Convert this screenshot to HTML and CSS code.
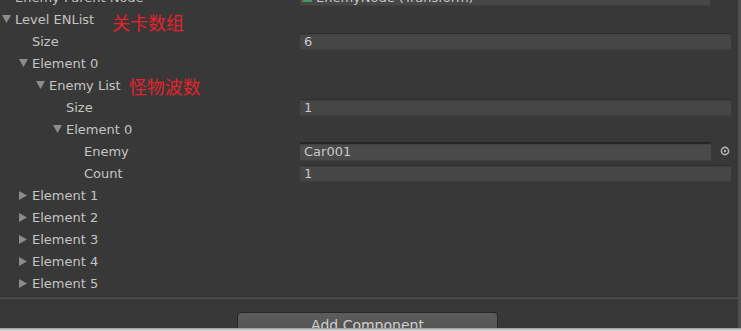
FILE: index.html
```html
<!DOCTYPE html>
<html>
<head>
<meta charset="utf-8">
<link rel="stylesheet" href="styles.css">
</head>
<body>
<div class="inspector">
  <div class="props">
    <div class="row">
      <div class="label lv0"><span class="tri"></span><span>Enemy Parent Node</span></div>
      <div class="value"><div class="field obj-top"><span class="tf-icon"></span>EnemyNode (Transform)</div></div>
    </div>
    <div class="row">
      <div class="label lv0"><span class="tri"><svg width="9" height="8" viewBox="0 0 9 8"><polygon points="0,0 9,0 4.5,8" /></svg></span><span>Level ENList</span><span class="note note-a">关卡数组</span></div>
      <div class="value"></div>
    </div>
    <div class="row">
      <div class="label lv1"><span class="tri"></span><span>Size</span></div>
      <div class="value"><div class="field">6</div></div>
    </div>
    <div class="row">
      <div class="label lv1"><span class="tri"><svg width="9" height="8" viewBox="0 0 9 8"><polygon points="0,0 9,0 4.5,8" /></svg></span><span>Element 0</span></div>
      <div class="value"></div>
    </div>
    <div class="row">
      <div class="label lv2"><span class="tri"><svg width="9" height="8" viewBox="0 0 9 8"><polygon points="0,0 9,0 4.5,8" /></svg></span><span>Enemy List</span><span class="note note-b">怪物波数</span></div>
      <div class="value"></div>
    </div>
    <div class="row">
      <div class="label lv3"><span class="tri"></span><span>Size</span></div>
      <div class="value"><div class="field">1</div></div>
    </div>
    <div class="row">
      <div class="label lv3"><span class="tri"><svg width="9" height="8" viewBox="0 0 9 8"><polygon points="0,0 9,0 4.5,8" /></svg></span><span>Element 0</span></div>
      <div class="value"></div>
    </div>
    <div class="row">
      <div class="label lv4"><span class="tri"></span><span>Enemy</span></div>
      <div class="value obj"><div class="field objfield">Car001</div><span class="picker"><svg width="10" height="10" viewBox="0 0 10 10"><circle cx="5" cy="5" r="3.6" fill="none" stroke="#b0b0b0" stroke-width="1.6"/><circle cx="5" cy="5" r="1.2" fill="#b0b0b0"/></svg></span></div>
    </div>
    <div class="row">
      <div class="label lv4"><span class="tri"></span><span>Count</span></div>
      <div class="value"><div class="field">1</div></div>
    </div>
    <div class="row">
      <div class="label lv1"><span class="tri"><svg width="8" height="9" viewBox="0 0 8 9"><polygon points="0,0 8,4.5 0,9" /></svg></span><span>Element 1</span></div>
      <div class="value"></div>
    </div>
    <div class="row">
      <div class="label lv1"><span class="tri"><svg width="8" height="9" viewBox="0 0 8 9"><polygon points="0,0 8,4.5 0,9" /></svg></span><span>Element 2</span></div>
      <div class="value"></div>
    </div>
    <div class="row">
      <div class="label lv1"><span class="tri"><svg width="8" height="9" viewBox="0 0 8 9"><polygon points="0,0 8,4.5 0,9" /></svg></span><span>Element 3</span></div>
      <div class="value"></div>
    </div>
    <div class="row">
      <div class="label lv1"><span class="tri"><svg width="8" height="9" viewBox="0 0 8 9"><polygon points="0,0 8,4.5 0,9" /></svg></span><span>Element 4</span></div>
      <div class="value"></div>
    </div>
    <div class="row">
      <div class="label lv1"><span class="tri"><svg width="8" height="9" viewBox="0 0 8 9"><polygon points="0,0 8,4.5 0,9" /></svg></span><span>Element 5</span></div>
      <div class="value"></div>
    </div>
  </div>
  <div class="sep"></div>
  <div class="footer">
    <button class="add-btn">Add Component</button>
  </div>
</div>
<div class="bottom-edge"></div>
</body>
</html>
```
FILE: styles.css
```css
html, body {
  margin: 0;
  padding: 0;
  width: 741px;
  height: 331px;
  overflow: hidden;
  background: #383838;
}
body {
  font-family: "DejaVu Sans", sans-serif;
  font-size: 13px;
  color: #c4c4c4;
}
.inspector {
  height: 328px;
  overflow: hidden;
  border-right: 3px solid #4e4e4e;
  box-sizing: border-box;
}
.props {
  margin-top: -14px;
}
.row {
  display: grid;
  grid-template-columns: 300px 1fr;
  height: 22px;
  align-items: center;
}
.label {
  display: flex;
  align-items: center;
  white-space: nowrap;
}
.lv0 { padding-left: 2px; }
.lv1 { padding-left: 19px; }
.lv2 { padding-left: 36px; }
.lv3 { padding-left: 53px; }
.lv4 { padding-left: 71px; }
.tri {
  width: 13px;
  flex: none;
  display: flex;
  align-items: center;
}
.tri svg {
  fill: #8c8c8c;
  display: block;
}
.note {
  font-family: "Noto Sans CJK SC", sans-serif;
  font-size: 18px;
  color: #e3232d;
  line-height: 20px;
}
.note-a {
  margin-left: 18px;
  position: relative;
  top: 3px;
}
.note-b {
  margin-left: 8px;
  position: relative;
  top: 1px;
}
.value {
  padding-right: 7px;
}
.field {
  height: 17px;
  box-sizing: border-box;
  background: #464646;
  border-top: 1px solid #2c2c2c;
  border-bottom: 1px solid #3e3e3e;
  box-shadow: inset 0 1px 0 #404040;
  padding-left: 4px;
  line-height: 15px;
  color: #c8c8c8;
}
.obj-top {
  margin-right: 21px;
  display: flex;
  align-items: center;
  padding-left: 2px;
  gap: 4px;
}
.tf-icon {
  width: 10px;
  height: 10px;
  background: linear-gradient(135deg, #c8383a 50%, #3c9a5a 50%);
}
.value.obj {
  display: flex;
  align-items: center;
}
.objfield {
  flex: 1;
  background: #4a4a4a;
  border-top: 2px solid #262626;
  height: 19px;
  line-height: 16px;
}
.picker {
  width: 19px;
  display: flex;
  justify-content: flex-end;
  padding-right: 1px;
  flex: none;
}
.picker svg { display: block; }
.sep {
  height: 2px;
  background: #4a4a4a;
  margin-top: 2px;
  border-top: 1px solid #303030;
}
.footer {
  padding-top: 13px;
  padding-left: 237px;
}
.add-btn {
  display: block;
  width: 261px;
  height: 22px;
  border: 1px solid #262626;
  border-radius: 4px 4px 0 0;
  background: linear-gradient(#5c5c5c, #525252);
  color: #cfcfcf;
  font-family: "DejaVu Sans", sans-serif;
  font-size: 14px;
  padding: 3px 0 0 0;
  text-align: center;
  line-height: 16px;
}
.bottom-edge {
  height: 3px;
  background: linear-gradient(#9a9a9a, #e4e4e4);
}
```
